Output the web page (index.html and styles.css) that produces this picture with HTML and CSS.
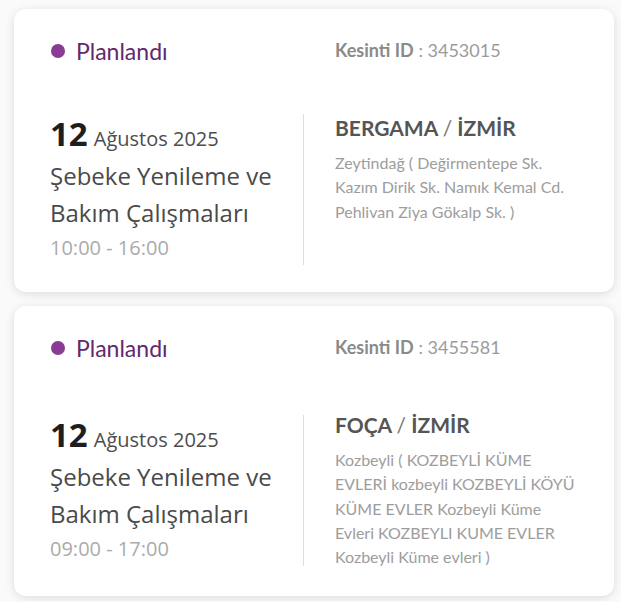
FILE: index.html
```html
<!DOCTYPE html>
<html lang="tr">
<head>
    <meta charset="UTF-8">
    <meta name="viewport" content="width=device-width, initial-scale=1.0">
    <title>Planlı Kesintiler</title>
    <link rel="stylesheet" href="styles.css">
</head>
<body>
    <div id="outage-list">
        <div class="card">
            <div class="card-top">
                <div class="status"><span class="dot"></span>Planlandı</div>
                <div class="outage-id"><b>Kesinti ID</b> : 3453015</div>
            </div>
            <div class="card-body">
                <div class="when">
                    <div class="date"><span class="day">12</span> Ağustos 2025</div>
                    <div class="title">Şebeke Yenileme ve Bakım Çalışmaları</div>
                    <div class="hours">10:00 - 16:00</div>
                </div>
                <div class="where">
                    <div class="city">BERGAMA <span class="slash">/</span> İZMİR</div>
                    <p class="streets">Zeytindağ ( Değirmentepe Sk. Kazım Dirik Sk. Namık Kemal Cd. Pehlivan Ziya Gökalp Sk. )</p>
                </div>
            </div>
        </div>

        <div class="card">
            <div class="card-top">
                <div class="status"><span class="dot"></span>Planlandı</div>
                <div class="outage-id"><b>Kesinti ID</b> : 3455581</div>
            </div>
            <div class="card-body">
                <div class="when">
                    <div class="date"><span class="day">12</span> Ağustos 2025</div>
                    <div class="title">Şebeke Yenileme ve Bakım Çalışmaları</div>
                    <div class="hours">09:00 - 17:00</div>
                </div>
                <div class="where">
                    <div class="city">FOÇA <span class="slash">/</span> İZMİR</div>
                    <p class="streets">Kozbeyli ( KOZBEYLİ KÜME EVLERİ kozbeyli KOZBEYLİ KÖYÜ KÜME EVLER Kozbeyli Küme Evleri KOZBEYLI KUME EVLER Kozbeyli Küme evleri )</p>
                </div>
            </div>
        </div>
    </div>
</body>
</html>
```

FILE: styles.css
```css
body {
    margin: 0;
    padding: 0;
    background: #fafafa;
    font-family: 'Open Sans', 'Noto Sans', sans-serif;
}
#outage-list {
    display: flex;
    flex-direction: column;
    gap: 14px;
    padding: 9px 7px 5px 14px;
}
.card {
    background: #ffffff;
    border-radius: 12px;
    box-shadow: 0 2px 10px rgba(0, 0, 0, 0.12);
    padding: 30px 34px 27px 36px;
}
.card-top, .card-body {
    display: grid;
    grid-template-columns: 254px 1fr;
    column-gap: 31px;
}
.card-top {
    align-items: center;
    height: 26px;
    margin-bottom: 49px;
}
.card-body {
    align-items: start;
}
.status {
    display: flex;
    align-items: center;
    gap: 11px;
    font-family: 'Lato', sans-serif;
    font-size: 23px;
    color: #62296b;
    margin-top: -2px;
}
.dot {
    width: 14px;
    height: 14px;
    border-radius: 50%;
    background: #883d94;
    margin-left: 1px;
}
.outage-id {
    font-family: 'Lato', sans-serif;
    font-size: 18px;
    color: #9b9b9b;
    margin-top: -4px;
}
.outage-id b {
    color: #8a8a8a;
}
.when {
    align-self: center;
    border-right: 1px solid #dedede;
}
.date {
    display: flex;
    align-items: baseline;
    gap: 6px;
    height: 43px;
    font-size: 20px;
    color: #4d4d4d;
}
.day {
    font-size: 33px;
    font-weight: bold;
    line-height: 40px;
    color: #1e1e1e;
}
.title {
    font-size: 24px;
    line-height: 37px;
    color: #4a4a4a;
    padding-right: 10px;
}
.hours {
    font-size: 20px;
    line-height: 34px;
    color: #ababab;
}
.where {
    font-family: 'Lato', sans-serif;
}
.city {
    font-size: 21px;
    font-weight: bold;
    line-height: 28px;
    color: #555555;
}
.slash {
    font-weight: normal;
    color: #777777;
}
.streets {
    margin: 9px 0 0;
    font-size: 16px;
    line-height: 24.3px;
    color: #9d9d9d;
}
```
